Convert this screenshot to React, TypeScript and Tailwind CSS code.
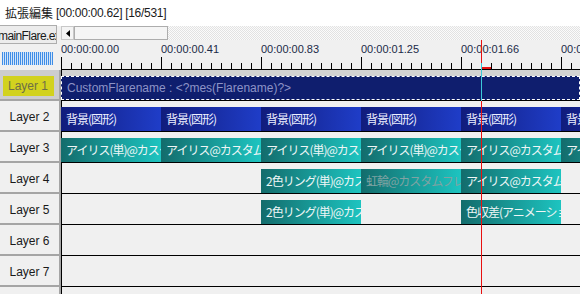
type Clip = { x: number; w: number; text: string; kind: 'sel' | 'blue' | 'teal'; dim?: boolean }
type Row = { name: string; selected?: boolean; clips: Clip[] }

const teal = (x: number, text: string, dim = false): Clip => ({ x, w: 100, text, kind: 'teal', dim })

const rows: Row[] = [
  { name: 'Layer 1', selected: true, clips: [{ x: 0, w: 519, kind: 'sel', text: 'CustomFlarename : <?mes(Flarename)?>' }] },
  { name: 'Layer 2', clips: [0, 100, 200, 300, 400, 500].map(x => ({ x, w: 100, kind: 'blue' as const, text: '背景(図形)' })) },
  {
    name: 'Layer 3',
    clips: [
      teal(0, 'アイリス(単)@カスタムフレア'),
      teal(100, 'アイリス@カスタムフレア'),
      teal(200, 'アイリス(単)@カスタムフレア'),
      teal(300, 'アイリス(単)@カスタムフレア'),
      teal(400, 'アイリス@カスタムフレア'),
      teal(500, 'アイリス(単)@カスタムフレア'),
    ],
  },
  {
    name: 'Layer 4',
    clips: [teal(200, '2色リング(単)@カスタムフレア'), teal(300, '虹輪@カスタムフレア', true), teal(400, 'アイリス@カスタムフレア')],
  },
  { name: 'Layer 5', clips: [teal(200, '2色リング(単)@カスタムフレア'), teal(400, '色収差(アニメーション)@カスタムフレア')] },
  { name: 'Layer 6', clips: [] },
  { name: 'Layer 7', clips: [] },
  { name: 'Layer 8', clips: [] },
]

const labels = ['00:00:00.00', '00:00:00.41', '00:00:00.83', '00:00:01.25', '00:00:01.66', '00:00:02.08']

function Ruler() {
  const ticks = Array.from({ length: 52 }, (_, i) => i * 10)
  return (
    <div className="h-[30px] bg-[#f0f0f0] flex flex-col">
      <div className="flex h-[17px] pt-[3px] overflow-hidden">
        {labels.map(l => (
          <div key={l} className="w-[100px] shrink-0 text-[11px] leading-[13px] text-[#1b2a48] whitespace-nowrap">
            {l}
          </div>
        ))}
      </div>
      <svg width="519" height="13" className="block">
        {ticks.map(x => (
          <line key={x} x1={x + 0.5} x2={x + 0.5} y1={x % 100 === 0 ? 0 : 6} y2={13} stroke="#000" strokeWidth="1" />
        ))}
        <line x1="0" x2="519" y1="12.5" y2="12.5" stroke="#000" strokeWidth="1" />
      </svg>
    </div>
  )
}

function ClipBox({ c }: { c: Clip }) {
  if (c.kind === 'sel') {
    return (
      <div
        className="absolute top-[6px] h-[24px] bg-[#0f1e6e] border border-dashed border-white flex items-center pl-[5px] overflow-hidden whitespace-nowrap text-[12px] text-[#8d93c6]"
        style={{ left: c.x, width: c.w }}
      >
        {c.text}
      </div>
    )
  }
  const bg = c.kind === 'blue'
    ? 'bg-[linear-gradient(90deg,#111c7c,#1f3dc8)] text-[#eef0ff]'
    : 'bg-[linear-gradient(90deg,#136c6c,#1dc4c0)] text-[#eef6f6]'
  return (
    <div
      className={`absolute top-[6px] h-[24px] flex items-center pl-[5px] overflow-hidden whitespace-nowrap text-[12px] tracking-[-1px] font-['Noto_Sans_CJK_JP',sans-serif] ${bg}`}
      style={{ left: c.x, width: c.w }}
    >
      <span className={c.dim ? 'text-[#7fa3a3]' : ''}>{c.text}</span>
    </div>
  )
}

export default function App() {
  return (
    <div className="relative w-[580px] h-[294px] overflow-hidden bg-[#f0f0f0] font-['Liberation_Sans','Noto_Sans_CJK_JP',sans-serif] text-[#1a1a1a]">
      {/* title */}
      <div className="h-[26px] bg-white flex items-center pl-[5px] text-[12px] whitespace-nowrap">
        <span className="font-['Noto_Sans_CJK_JP',sans-serif]">拡張編集</span>
        <span className="ml-[3px] tracking-[-0.3px]">[00:00:00.62] [16/531]</span>
      </div>

      {/* scrollbar + ruler */}
      <div className="flex h-[44px]">
        <div className="w-[61px] shrink-0 flex flex-col">
          <div className="-mt-px h-[19px] w-[57px] border border-l-0 border-[#adadad] bg-[#ececec] overflow-hidden whitespace-nowrap text-[12px] leading-[20px] tracking-[-0.6px] -indent-[2px]">
            mainFlare.exa
          </div>
          <div className="mt-[8px] ml-[2px] h-[13px] w-[51px] bg-[image:repeating-linear-gradient(90deg,#3f8de6_0_1px,#d2e4f8_1px_2px)]" />
        </div>
        <div className="flex-1 flex flex-col">
          <div className="h-[14px] flex bg-[image:conic-gradient(#e2e2e2_25%,#fbfbfb_0_50%,#e2e2e2_0_75%,#fbfbfb_0)] bg-[length:2px_2px]">
            <div className="w-[13px] bg-[#f4f4f4] border border-[#c8c8c8] flex items-center justify-center">
              <svg width="4" height="7" viewBox="0 0 4 7">
                <polygon points="4,0 4,7 0,3.5" fill="#000" />
              </svg>
            </div>
            <div className="w-[94px] bg-[#f5f5f5] border border-[#adadad]" />
          </div>
          <Ruler />
        </div>
      </div>

      {/* layers */}
      {rows.map(r => (
        <div key={r.name} className="flex h-[31px]">
          <div
            className={`w-[61px] shrink-0 flex items-center justify-center pt-[3px] border-b-2 border-r-2 border-[#a5a5a5] text-[12px] ${r.selected ? 'bg-[#cdcdcd]' : 'bg-[#f0f0f0]'}`}
          >
            {r.selected ? (
              <span className="w-[51px] h-[20px] -ml-[3px] bg-[#d2d21e] text-[#6e6e46] flex items-center justify-center">{r.name}</span>
            ) : (
              <span>{r.name}</span>
            )}
          </div>
          <div className={`relative flex-1 border-b border-black shadow-[inset_1px_0_0_#000] ${r.selected ? 'bg-[#d3d3d3]' : 'bg-[#f0f0f0]'}`}>
            {r.clips.map(c => (
              <ClipBox key={c.x} c={c} />
            ))}
          </div>
        </div>
      ))}

      {/* playhead */}
      <div className="absolute left-[481px] top-[40px] bottom-0 w-px bg-[#e81010]" />
      <div className="absolute left-[481px] top-[63px] h-[38px] w-px bg-[#3cc8d8]" />
      <div className="absolute left-[482px] top-[67px] h-[2px] w-[9px] bg-[#e81010]" />
    </div>
  )
}
